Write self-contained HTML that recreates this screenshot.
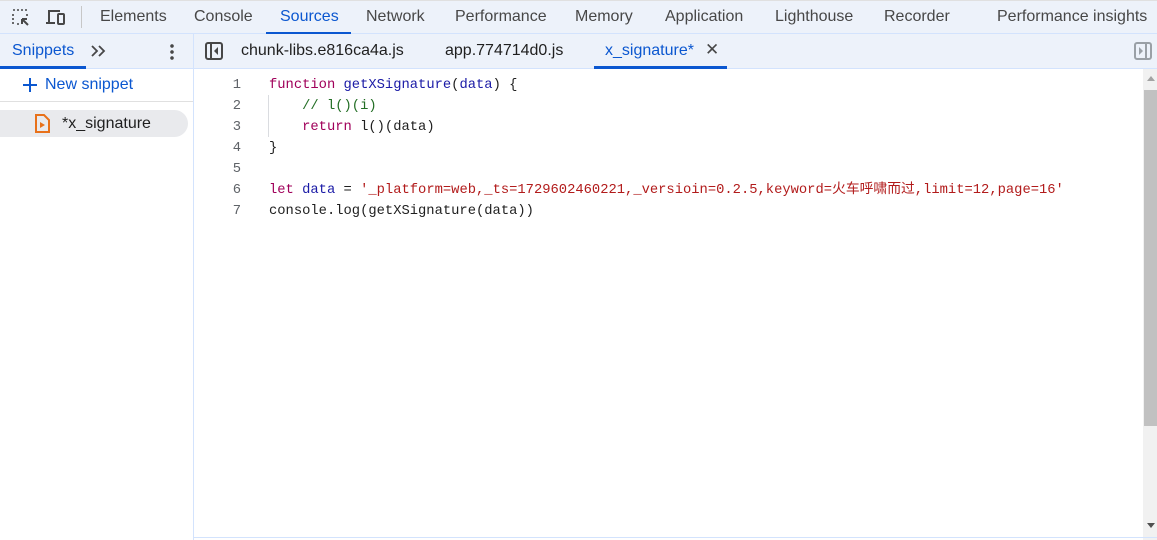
<!DOCTYPE html>
<html><head><meta charset="utf-8"><style>
*{margin:0;padding:0;box-sizing:border-box}
body{width:1157px;height:540px;overflow:hidden;background:#fff;font-family:"Liberation Sans","Noto Sans CJK SC",sans-serif;position:relative;color:#1f1f1f}
.a{position:absolute;white-space:nowrap}
.top{left:0;top:0;width:1157px;height:34px;background:#edf2fa;border-bottom:1px solid #d3e3fd;border-top:1px solid #e0e0e0}
.t{top:8px;font-size:16px;color:#474747}
.bar2{left:0;top:34px;width:1157px;height:35px;background:#edf2fa;border-bottom:1px solid #d3e3fd}
.code{font-family:"Liberation Mono","Noto Sans CJK SC",monospace;font-size:13.8px;line-height:21px;white-space:pre}
.ln{left:200px;width:41px;text-align:right;top:75px;color:#5f6368}
.k{color:#a0005a}.v{color:#1a1aa6}.s{color:#b21b1b}.c{color:#236e25}
</style></head><body>
<div class="a top"></div>
<svg class="a" style="left:11px;top:8px" width="20" height="20" viewBox="0 0 20 20"><path d="M2 2h2M6 2h2M10 2h2M14 2h2M2 6v2M2 10v2M2 14v2M16 6v2M6 16h2" stroke="#474747" stroke-width="1.6"/><path d="M11 11l6 6M11 11h5M11 11v5" stroke="#474747" stroke-width="2" fill="none"/></svg>
<svg class="a" style="left:45px;top:8px" width="22" height="18" viewBox="0 0 22 18"><path d="M4 14V3h11M1 15h9" stroke="#474747" stroke-width="2" fill="none"/><rect x="13" y="6" width="6" height="10" rx="1" stroke="#474747" stroke-width="2" fill="none"/></svg>
<div class="a" style="left:81px;top:6px;width:1px;height:22px;background:#c7c7c7"></div>
<div class="a t" style="left:100px">Elements</div>
<div class="a t" style="left:194px">Console</div>
<div class="a t" style="left:280px;color:#0b57d0">Sources</div>
<div class="a" style="left:266px;top:32px;width:85px;height:3px;background:#0b57d0"></div>
<div class="a t" style="left:366px">Network</div>
<div class="a t" style="left:455px">Performance</div>
<div class="a t" style="left:575px">Memory</div>
<div class="a t" style="left:665px">Application</div>
<div class="a t" style="left:775px">Lighthouse</div>
<div class="a t" style="left:884px">Recorder</div>
<div class="a t" style="left:997px">Performance insights</div>
<div class="a bar2"></div>
<div class="a" style="left:193px;top:34px;width:1px;height:506px;background:#d3e3fd"></div>
<div class="a" style="left:12px;top:42px;font-size:16px;color:#0b57d0">Snippets</div>
<div class="a" style="left:0;top:66px;width:86px;height:3px;background:#0b57d0"></div>
<svg class="a" style="left:90px;top:44px" width="17" height="14" viewBox="0 0 17 14"><path d="M2 2l5 5-5 5M9 2l5 5-5 5" stroke="#474747" stroke-width="1.8" fill="none"/></svg>
<div class="a" style="left:170px;top:43px;width:4px;height:17px;background:radial-gradient(circle,#474747 1.6px,transparent 2px) 0 0/4px 6px"></div>
<svg class="a" style="left:205px;top:42px" width="18" height="18" viewBox="0 0 18 18"><rect x="1" y="1" width="16" height="16" rx="2" stroke="#474747" stroke-width="2" fill="none"/><path d="M6 1v16" stroke="#474747" stroke-width="2"/><path d="M13 5l-4 4 4 4z" fill="#474747"/></svg>
<div class="a" style="left:241px;top:42px;font-size:16px;color:#1f1f1f">chunk-libs.e816ca4a.js</div>
<div class="a" style="left:445px;top:42px;font-size:16px;color:#1f1f1f">app.774714d0.js</div>
<div class="a" style="left:605px;top:42px;font-size:16px;color:#0b57d0">x_signature*</div>
<div class="a" style="left:705px;top:40px;font-size:17px;color:#474747">✕</div>
<div class="a" style="left:594px;top:66px;width:133px;height:3px;background:#0b57d0"></div>
<svg class="a" style="left:1134px;top:42px" width="18" height="18" viewBox="0 0 18 18"><rect x="1" y="1" width="16" height="16" rx="2" stroke="#9aa0a6" stroke-width="2" fill="none"/><path d="M12 1v16" stroke="#9aa0a6" stroke-width="2"/><path d="M5 5l4 4-4 4z" fill="#9aa0a6"/></svg>
<div class="a" style="left:0;top:101px;width:193px;height:1px;background:#e0e0e0"></div>
<svg class="a" style="left:22px;top:77px" width="16" height="16" viewBox="0 0 16 16"><path d="M8 1v14M1 8h14" stroke="#0b57d0" stroke-width="2"/></svg>
<div class="a" style="left:45px;top:76px;font-size:16px;color:#0b57d0">New snippet</div>
<div class="a" style="left:0;top:110px;width:188px;height:27px;background:#e9eaed;border-radius:0 14px 14px 0"></div>
<svg class="a" style="left:34px;top:114px" width="16" height="20" viewBox="0 0 16 20"><path d="M2 1h8l5 5v12H2z" fill="none" stroke="#e8711a" stroke-width="2"/><path d="M6 8l5 3-5 3z" fill="#e8711a"/></svg>
<div class="a" style="left:62px;top:115px;font-size:16px;color:#1f1f1f">*x_signature</div>
<div class="a code ln">1
2
3
4
5
6
7</div>
<div class="a" style="left:268px;top:95px;width:1px;height:42px;background:#dadce0"></div>
<div class="a code" style="left:269px;top:75px;color:#1f1f1f"><span class="k">function</span> <span class="v">getXSignature</span>(<span class="v">data</span>) {
    <span class="c">// l()(i)</span>
    <span class="k">return</span> l()(data)
}

<span class="k">let</span> <span class="v">data</span> = <span class="s">'_platform=web,_ts=1729602460221,_versioin=0.2.5,keyword=火车呼啸而过,limit=12,page=16'</span>
console.log(getXSignature(data))</div>
<div class="a" style="left:1143px;top:69px;width:14px;height:471px;background:#f1f1f1"></div>
<div class="a" style="left:1144px;top:90px;width:13px;height:336px;background:#c1c1c1"></div>
<div class="a" style="left:1147px;top:76px;border:4px solid transparent;border-bottom:5px solid #a3a3a3;border-top:0"></div>
<div class="a" style="left:1147px;top:523px;border:4px solid transparent;border-top:5px solid #505050;border-bottom:0"></div>
<div class="a" style="left:194px;top:537px;width:963px;height:1px;background:#d3e3fd"></div>
</body></html>
